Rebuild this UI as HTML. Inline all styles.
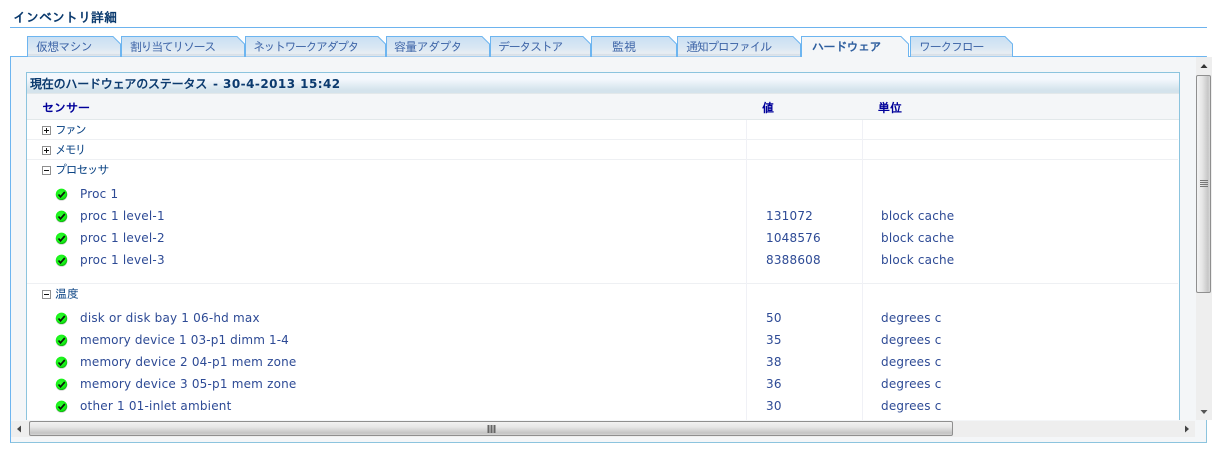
<!DOCTYPE html>
<html><head><meta charset="utf-8">
<style>
html,body{margin:0;padding:0;background:#fff;width:1222px;height:454px;overflow:hidden}
body{position:relative;font:12px "DejaVu Sans","WenQuanYi Zen Hei",sans-serif}
div,span,svg{position:absolute;box-sizing:border-box}
.t{white-space:nowrap;line-height:16px;height:16px}
.jp{font-family:"WenQuanYi Zen Hei","IPAGothic",sans-serif}
.tab{color:#3f66a8;top:39px;font-size:12px}
.tree{color:#0d4585;left:55px}
.v{color:#2d4a95;font-size:12px;letter-spacing:.2px}
.hd{color:#00009a;font-weight:bold;top:100px}
.ln{background:#eef0f3;height:1px;left:27px;width:1151px}
.box{left:42px;width:9px;height:9px;border:1px solid #8f8f8f;background:#fff}
.box:before{content:"";position:absolute;left:1px;top:3px;width:5px;height:1px;background:#111}
.p:after{content:"";position:absolute;left:3px;top:1px;width:1px;height:5px;background:#111}
</style></head><body>
<div class="t jp" style="left:13px;top:10px;color:#0b3a6e;font-weight:bold;font-size:13px">インベントリ詳細</div>
<div style="left:10px;top:27px;width:1197px;height:1px;background:#6db3ee"></div>

<div style="left:10px;top:56px;width:1197px;height:387px;background:#f4f6f8;border:1px solid #6db5f0;border-bottom-color:#8cc4de;border-right-color:#8cc4de"></div>

<svg style="left:0;top:30px" width="1222" height="30" viewBox="0 0 1222 30">
<defs><linearGradient id="g" x1="0" y1="0" x2="0" y2="1">
<stop offset="0" stop-color="#c9dff3"/><stop offset=".55" stop-color="#d9e7f3"/><stop offset=".85" stop-color="#e9eef3"/><stop offset=".9" stop-color="#d6dee6"/><stop offset="1" stop-color="#e4e9ee"/></linearGradient></defs>
<g fill="url(#g)" stroke="#6db5f0" stroke-width="1">
<path d="M27.5 26.5V6.5H113L120.500 14V26.500"/>
<path d="M121.500 26.500V6.500H237L244.500 14V26.500"/>
<path d="M245.500 26.500V6.500H378L385.500 14V26.500"/>
<path d="M386.500 26.500V6.500H482L489.500 14V26.500"/>
<path d="M490.500 26.500V6.500H583L590.500 14V26.500"/>
<path d="M591.500 26.500V6.500H669L676.500 14V26.500"/>
<path d="M677.500 26.500V6.500H793L800.500 14V26.500"/>
<path d="M910.500 26.500V6.500H1005L1012.500 14V26.500"/>
</g>
<path d="M801.500 27V6.500H901L908.500 14V27" fill="#f4f6f8" stroke="#6db5f0"/>
<rect x="802" y="26" width="106" height="2" fill="#f4f6f8"/>
</svg>

<div class="t tab jp" style="left:36px;letter-spacing:-.8px">仮想マシン</div>
<div class="t tab jp" style="left:130px;letter-spacing:-1.4px">割り当てリソース</div>
<div class="t tab jp" style="left:253px;letter-spacing:-1.5px">ネットワークアダプタ</div>
<div class="t tab jp" style="left:394px;letter-spacing:-.7px">容量アダプタ</div>
<div class="t tab jp" style="left:498px;letter-spacing:-1.3px">データストア</div>
<div class="t tab jp" style="left:612px">監視</div>
<div class="t tab jp" style="left:686px;letter-spacing:-1.4px">通知プロファイル</div>
<div class="t tab jp" style="left:812px;color:#2f5f9f;font-weight:bold;letter-spacing:-.5px">ハードウェア</div>
<div class="t tab jp" style="left:919px;letter-spacing:-1.3px">ワークフロー</div>

<div style="left:26px;top:72px;width:1154px;height:348px;background:#fff;border:1px solid #8cc4de;border-bottom:0"></div>
<div style="left:27px;top:73px;width:1152px;height:20px;background:linear-gradient(#f4f8fd 0,#f4f8fd 30%,#d4e3ec 85%,#d4e3ec 100%)"></div>
<div style="left:27px;top:93px;width:1152px;height:27px;background:#f4f6f8;border-top:1px solid #e2e8ea;border-bottom:1px solid #e2e8ea"></div>
<div class="t" style="left:30px;top:76px;color:#0b3a6e;font-weight:bold;font-family:'WenQuanYi Zen Hei',sans-serif;letter-spacing:-.2px">現在のハードウェアのステータス</div>
<div class="t" style="left:213px;top:76px;color:#0b3a6e;font-weight:bold;letter-spacing:.45px">- 30-4-2013 15:42</div>
<div class="t hd jp" style="left:42px">センサー</div>
<div class="t hd jp" style="left:762px">値</div>
<div class="t hd jp" style="left:878px">単位</div>

<div class="ln" style="top:139px"></div>
<div class="ln" style="top:159px"></div>
<div class="ln" style="top:283px"></div>
<div style="left:746px;top:120px;width:1px;height:300px;background:#f0f1f6"></div>
<div style="left:862px;top:120px;width:1px;height:300px;background:#f0f1f6"></div>

<div class="box p" style="top:126px"></div><div class="t tree jp" style="top:122px;letter-spacing:-2px">ファン</div>
<div class="box p" style="top:146px"></div><div class="t tree jp" style="top:142px;letter-spacing:-2.2px">メモリ</div>
<div class="box" style="top:166px"></div><div class="t tree jp" style="top:162px;letter-spacing:-1.4px">プロセッサ</div>
<div class="box" style="top:290px"></div><div class="t tree jp" style="top:286px">温度</div>

<svg width="0" height="0" style="left:0;top:0"><defs>
<radialGradient id="c" cx=".45" cy=".4" r=".6"><stop offset="0" stop-color="#30ff30"/><stop offset=".75" stop-color="#14f014"/><stop offset="1" stop-color="#0cb00c"/></radialGradient>
<symbol id="k" viewBox="0 0 13 13"><circle cx="6.500" cy="7" r="5.800" fill="#999" opacity=".45"/><circle cx="6.500" cy="6.300" r="5.700" fill="url(#c)"/><path d="M3.500 6.500L5.500 8.800L9.800 4" fill="none" stroke="#0a1a0a" stroke-width="1.700"/></symbol>
</defs></svg>
<svg style="left:55px;top:188px" width="13" height="13"><use href="#k"/></svg>
<svg style="left:55px;top:210px" width="13" height="13"><use href="#k"/></svg>
<svg style="left:55px;top:232px" width="13" height="13"><use href="#k"/></svg>
<svg style="left:55px;top:254px" width="13" height="13"><use href="#k"/></svg>
<svg style="left:55px;top:312px" width="13" height="13"><use href="#k"/></svg>
<svg style="left:55px;top:334px" width="13" height="13"><use href="#k"/></svg>
<svg style="left:55px;top:356px" width="13" height="13"><use href="#k"/></svg>
<svg style="left:55px;top:378px" width="13" height="13"><use href="#k"/></svg>
<svg style="left:55px;top:400px" width="13" height="13"><use href="#k"/></svg>

<div class="t v" style="left:80px;top:186px">Proc 1</div>
<div class="t v" style="left:80px;top:208px">proc 1 level-1</div><div class="t v" style="left:766px;top:208px">131072</div><div class="t v" style="left:881px;top:208px">block cache</div>
<div class="t v" style="left:80px;top:230px">proc 1 level-2</div><div class="t v" style="left:766px;top:230px">1048576</div><div class="t v" style="left:881px;top:230px">block cache</div>
<div class="t v" style="left:80px;top:252px">proc 1 level-3</div><div class="t v" style="left:766px;top:252px">8388608</div><div class="t v" style="left:881px;top:252px">block cache</div>
<div class="t v" style="left:80px;top:310px">disk or disk bay 1 06-hd max</div><div class="t v" style="left:766px;top:310px">50</div><div class="t v" style="left:881px;top:310px">degrees c</div>
<div class="t v" style="left:80px;top:332px;letter-spacing:.13px">memory device 1 03-p1 dimm 1-4</div><div class="t v" style="left:766px;top:332px">35</div><div class="t v" style="left:881px;top:332px">degrees c</div>
<div class="t v" style="left:80px;top:354px">memory device 2 04-p1 mem zone</div><div class="t v" style="left:766px;top:354px">38</div><div class="t v" style="left:881px;top:354px">degrees c</div>
<div class="t v" style="left:80px;top:376px">memory device 3 05-p1 mem zone</div><div class="t v" style="left:766px;top:376px">36</div><div class="t v" style="left:881px;top:376px">degrees c</div>
<div class="t v" style="left:80px;top:398px">other 1 01-inlet ambient</div><div class="t v" style="left:766px;top:398px">30</div><div class="t v" style="left:881px;top:398px">degrees c</div>

<!-- vertical scrollbar -->
<div style="left:1196px;top:57px;width:16px;height:363px;background:#eeeeee"></div>
<div style="left:1196px;top:75px;width:15px;height:218px;border:1px solid #8f8f8f;border-radius:2px;background:linear-gradient(90deg,#f4f4f4,#e6e6e6 40%,#c6c6c6 85%,#dadada)"></div>
<svg style="left:1196px;top:57px" width="16" height="363">
<path d="M8 7L11.500 11H4.500Z" fill="#333"/>
<path d="M4.500 353H11.500L8 357Z" fill="#555"/>
<path d="M4 123.500H12M4 125.500H12M4 127.500H12M4 129.500H12" stroke="#777" stroke-width="1"/>
</svg>
<!-- horizontal scrollbar -->
<div style="left:11px;top:421px;width:1184px;height:16px;background:#eeeeee"></div>
<div style="left:29px;top:421px;width:924px;height:15px;border:1px solid #8f8f8f;border-radius:2px;background:linear-gradient(#f2f2f2,#e6e6e6 40%,#c4c4c4 85%,#d4d4d4)"></div>
<svg style="left:11px;top:421px" width="1184" height="16">
<path d="M6 8L10 4.500V11.500Z" fill="#444"/>
<path d="M1174 4.500L1178 8L1174 11.500Z" fill="#444"/>
<path d="M477.500 4V12M480.500 4V12M483.500 4V12" stroke="#666" stroke-width="2"/>
</svg>
</body></html>
